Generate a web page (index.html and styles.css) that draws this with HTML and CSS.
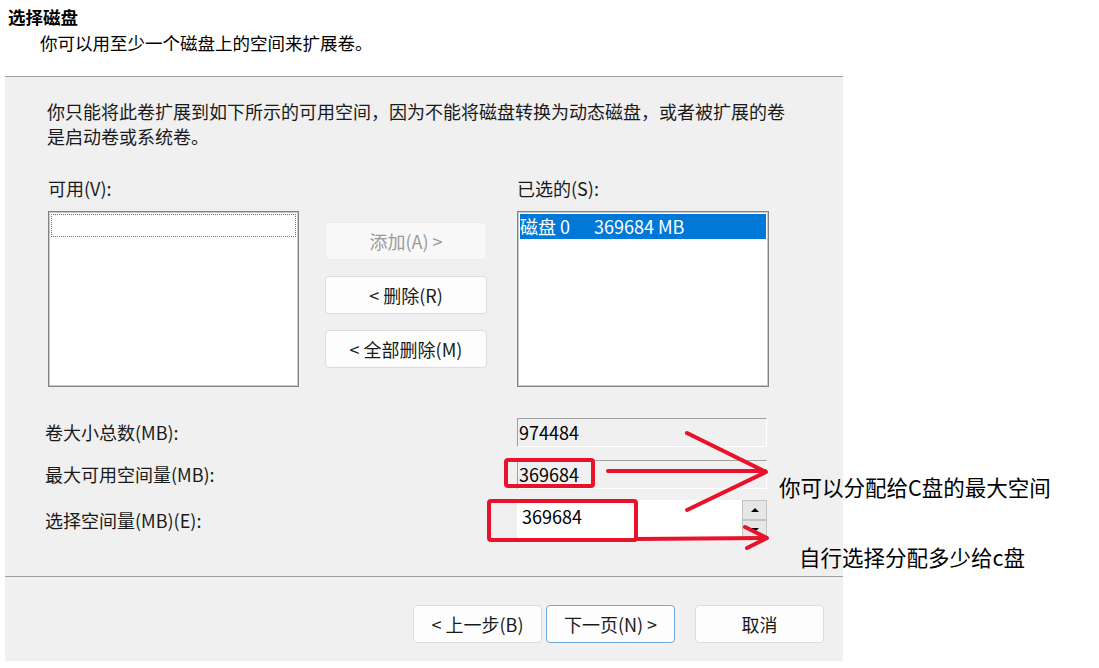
FILE: index.html
```html
<!DOCTYPE html>
<html lang="zh-CN">

<head>
    <meta charset="UTF-8">
    <title>扩展卷向导</title>
    <link rel="stylesheet" href="styles.css">
</head>

<body>
    <div class="page">
        <!-- Header -->
        <div class="head">
            <h1>选择磁盘</h1>
            <p>你可以用至少一个磁盘上的空间来扩展卷。</p>
        </div>

        <div class="wizard">
            <div class="main">
                <p class="note">你只能将此卷扩展到如下所示的可用空间，因为不能将磁盘转换为动态磁盘，或者被扩展的卷<br>是启动卷或系统卷。</p>

                <!-- Disk lists -->
                <div class="pick">
                    <div class="col">
                        <div class="cap">可用(V):</div>
                        <div class="listbox">
                            <div class="focus-row"></div>
                        </div>
                    </div>
                    <div class="moves">
                        <button class="btn" disabled>添加(A) &gt;</button>
                        <button class="btn">&lt; 删除(R)</button>
                        <button class="btn">&lt; 全部删除(M)</button>
                    </div>
                    <div class="col">
                        <div class="cap">已选的(S):</div>
                        <div class="listbox">
                            <div class="row selected"><span class="disk">磁盘 0</span><span>369684 MB</span></div>
                        </div>
                    </div>
                </div>

                <!-- Sizes -->
                <div class="sizes">
                    <div class="size-row">
                        <span class="lbl">卷大小总数(MB):</span>
                        <div class="field readonly">974484</div>
                    </div>
                    <div class="size-row second">
                        <span class="lbl">最大可用空间量(MB):</span>
                        <div class="field readonly">369684</div>
                    </div>
                    <div class="size-row third">
                        <span class="lbl">选择空间量(MB)(E):</span>
                        <div class="spin">
                            <div class="spin-input">369684</div>
                            <div class="spin-btns">
                                <div class="spin-btn"><span class="tri up"></span></div>
                                <div class="spin-btn"><span class="tri down"></span></div>
                            </div>
                        </div>
                    </div>
                </div>
            </div>

            <!-- Footer buttons -->
            <div class="footer">
                <button class="btn nav">&lt; 上一步(B)</button>
                <button class="btn nav primary">下一页(N) &gt;</button>
                <button class="btn nav cancel">取消</button>
            </div>
        </div>

        <!-- Red annotations drawn over the dialog -->
        <svg class="marks" width="1099" height="668" viewBox="0 0 1099 668">
            <g fill="none" stroke="#e8132b" stroke-width="4" stroke-linecap="round" stroke-linejoin="round">
                <rect x="506" y="460" width="87" height="26" rx="2"/>
                <rect x="489" y="501" width="147" height="39" rx="2"/>
                <path d="M608 471 L765 471"/>
                <path d="M687 433 L766 472 L687 510"/>
                <path d="M636 539 L766 538"/>
                <path d="M745 527 L767 538 L747 548"/>
            </g>
        </svg>
        <span class="tip tip-max">你可以分配给C盘的最大空间</span>
        <span class="tip tip-pick">自行选择分配多少给c盘</span>
    </div>
</body>

</html>
```

FILE: styles.css
```css
/* Basic Reset */
* {
    margin: 0;
    padding: 0;
    box-sizing: border-box;
}

body {
    font-family: "Noto Sans CJK SC", "Microsoft YaHei", sans-serif;
    background-color: #fff;
    color: #1a1a1a;
    font-size: 17.5px;
}

.page {
    position: relative;
    width: 1099px;
    height: 668px;
}

/* Header */
.head {
    height: 76px;
    padding: 5px 0 0 8px;
}

.head h1 {
    font-size: 17.5px;
    font-weight: bold;
    line-height: 24px;
    color: #000;
}

.head p {
    line-height: 24px;
    margin-top: 2px;
    padding-left: 32px;
    color: #000;
}

/* Dialog body */
.wizard {
    width: 838px;
    margin-left: 5px;
    background-color: #f0f0f0;
    border-top: 1px solid #a0a0a0;
}

.main {
    height: 500px;
    padding: 22px 0 0 40px;
    border-bottom: 1px solid #a0a0a0;
}

.note {
    font-size: 18px;
    line-height: 25px;
    margin-left: 2px;
    white-space: nowrap;
}

/* Lists */
.pick {
    display: flex;
    align-items: flex-start;
    margin: 27px 0 0 3px;
}

.cap {
    font-size: 18px;
    line-height: 25px;
    margin-bottom: 10px;
}

.listbox {
    width: 251px;
    height: 176px;
    background-color: #fff;
    border: 1px solid #838383;
    box-shadow: inset 0 0 0 1px #c9c9c9;
    padding: 2px;
}

.col:last-child .listbox {
    width: 252px;
}

.focus-row {
    height: 23px;
    border: 1px dotted #707070;
}

.row {
    height: 25px;
    line-height: 25px;
    font-size: 18px;
    white-space: nowrap;
}

.row.selected {
    background-color: #0078d7;
    color: #fff;
}

.row .disk {
    display: inline-block;
    width: 74px;
}

.moves {
    display: flex;
    flex-direction: column;
    gap: 16px;
    margin: 46px 30px 0 26px;
}

/* Buttons */
.btn {
    font-family: inherit;
    font-size: 18px;
    color: #1a1a1a;
    width: 162px;
    height: 38px;
    background-color: #fdfdfd;
    border: 1px solid #dcdcdc;
    border-radius: 4px;
}

.btn:disabled {
    background-color: #f8f8f8;
    border-color: #ececec;
    color: #9a9a9a;
}

/* Size fields */
.sizes {
    margin-top: 31px;
}

.size-row {
    display: flex;
    align-items: center;
    height: 29px;
}

.size-row.second {
    margin-top: 13px;
}

.size-row.third {
    margin-top: 11px;
    height: 40px;
}

.lbl {
    width: 472px;
    font-size: 18px;
    line-height: 25px;
}

.field {
    width: 250px;
    height: 29px;
    font-size: 18px;
    line-height: 27px;
    padding-left: 1px;
    color: #000;
}

.field.readonly {
    background-color: #f0f0f0;
    border-top: 1px solid #a0a0a0;
    border-left: 1px solid #a0a0a0;
    border-right: 1px solid #fff;
    border-bottom: 1px solid #fff;
}

.spin {
    display: flex;
    width: 250px;
    height: 40px;
}

.spin-input {
    flex: 1;
    background-color: #fff;
    font-size: 18px;
    line-height: 25px;
    padding: 4px 0 0 5px;
    color: #000;
}

.spin-btns {
    width: 25px;
    display: flex;
    flex-direction: column;
}

.spin-btn {
    flex: 1;
    background-color: #e6e6e6;
    border: 1px solid #c4c4c4;
    display: flex;
    align-items: center;
    justify-content: center;
}

.tri {
    width: 0;
    height: 0;
    border-left: 4px solid transparent;
    border-right: 4px solid transparent;
}

.tri.up {
    border-bottom: 4px solid #000;
}

.tri.down {
    border-top: 4px solid #000;
}

/* Footer */
.footer {
    height: 84px;
    display: flex;
    justify-content: flex-end;
    align-items: flex-start;
    padding: 28px 19px 0 0;
}

.btn.nav {
    width: 129px;
}

.btn.primary {
    margin-left: 4px;
    border-color: #6ea8de;
}

.btn.cancel {
    margin-left: 20px;
}

/* Annotations */
.marks {
    position: absolute;
    top: 0;
    left: 0;
    pointer-events: none;
}

.tip {
    position: absolute;
    font-size: 21.5px;
    line-height: 28px;
    color: #000;
    white-space: nowrap;
}

.tip-max {
    left: 779px;
    top: 473px;
}

.tip-pick {
    left: 799px;
    top: 543px;
}
```
